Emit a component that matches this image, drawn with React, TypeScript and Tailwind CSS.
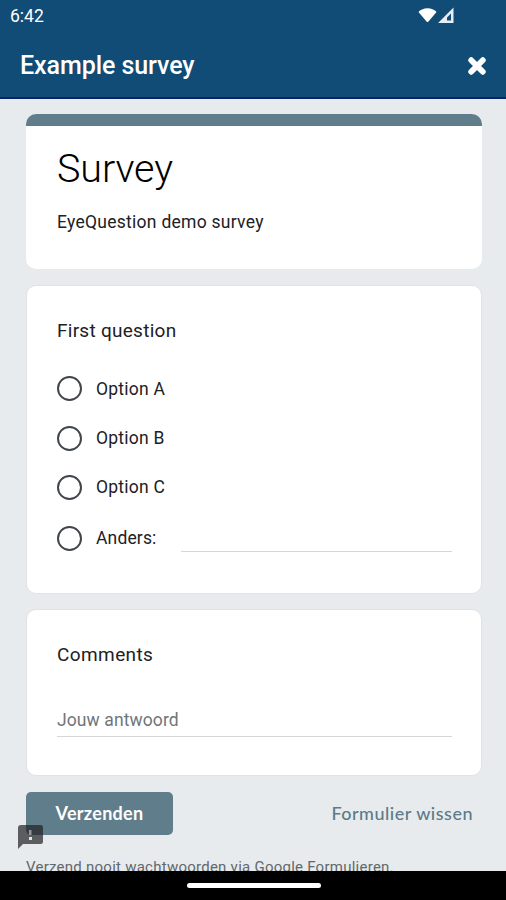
const OPTIONS = ['Option A', 'Option B', 'Option C'];

function StatusBar() {
  return (
    <div className="flex h-8 items-center justify-between pl-[10px] pr-[50px] text-white">
      <span className="text-[17.5px] leading-8">6:42</span>
      <svg width="38" height="18" viewBox="0 0 38 18">
        <path d="M0.5 5Q1 3.5 4 2.5Q9.5 0 15 2.5Q18 3.5 18.5 5L10.5 14.5Q9.5 15.5 8.5 14.5Z" fill="#fff" />
        <path fillRule="evenodd" d="M20 16L35.5 0.5V16ZM29 13.5H33V6.5L29 10.5Z" fill="#e6edf3" />
      </svg>
    </div>
  );
}

function Header() {
  return (
    <header className="h-[99px] shrink-0 border-b-2 border-[#0b2469] bg-[#104c76]">
      <StatusBar />
      <div className="flex h-[67px] items-center justify-between pl-5 pr-[19px] text-white">
        <h1 className="mt-px text-[25px] font-medium leading-8 tracking-[-0.07px]">Example survey</h1>
        <svg width="20" height="20" viewBox="0 0 20 20">
          <path d="M4.2 4.2L15.8 15.8M15.8 4.2L4.2 15.8" stroke="#fff" strokeWidth="5.8" strokeLinecap="round" />
        </svg>
      </div>
    </header>
  );
}

function Radio() {
  return <span className="size-[25px] shrink-0 rounded-full border-2 border-[#41464b]" />;
}

export default function App() {
  return (
    <div className="relative flex h-[900px] w-[506px] flex-col overflow-hidden bg-[#e7ebed] font-['Roboto',sans-serif] text-[#202124]">
      <Header />

      <main className="flex h-[772px] flex-col overflow-hidden pl-[26px] pr-6 pt-[15px]">
        {/* Title card */}
        <section className="h-[155px] shrink-0 overflow-hidden rounded-[10px] bg-white">
          <div className="h-3 bg-[#607d8b]" />
          <div className="px-[31px]">
            <h2 className="pt-[19px] text-[39.5px] font-[350] leading-[48px] tracking-[-0.1px] text-black">Survey</h2>
            <p className="mt-[17px] text-[17.5px] leading-6 tracking-[0.27px]">EyeQuestion demo survey</p>
          </div>
        </section>

        {/* Multiple choice question */}
        <section className="mt-4 h-[309px] shrink-0 rounded-[10px] border border-[#dfe3e5] bg-white pl-[30px] pr-[29px] pt-[33px]">
          <h3 className="text-[19px] font-normal leading-6 tracking-[0.27px]">First question</h3>
          <div className="mt-[21px] flex flex-col">
            {OPTIONS.map((option) => (
              <label key={option} className="flex h-[49.4px] items-center gap-[14px]">
                <Radio />
                <span className="text-[17.5px] leading-6 tracking-[0.25px]">{option}</span>
              </label>
            ))}
            <label className="flex h-[52px] items-center">
              <Radio />
              <span className="ml-[14px] w-[85px] text-[17.5px] leading-6 tracking-[0.15px]">Anders:</span>
              <span className="h-[27px] flex-1 border-b border-[#d4d6d8]" />
            </label>
          </div>
        </section>

        {/* Open question */}
        <section className="mt-[15px] h-[167px] shrink-0 rounded-[10px] border border-[#dfe3e5] bg-white pl-[30px] pr-[29px] pt-[33px]">
          <h3 className="text-[19px] font-normal leading-6 tracking-[0.4px]">Comments</h3>
          <div className="mt-[41px] h-[29px] border-b border-[#d4d6d8] text-[17.5px] leading-6 tracking-[0.1px] text-[#70757a]">
            Jouw antwoord
          </div>
        </section>

        <div className="mt-4 flex h-[43px] shrink-0 items-center justify-between font-['Lato',sans-serif]">
          <button className="h-[43px] w-[147px] rounded-[5px] bg-[#5f7d8a] text-[18px] font-bold tracking-[0.3px] text-white">
            Verzenden
          </button>
          <button className="pr-[9px] text-[18px] font-medium tracking-[0.5px] text-[#5b7b89]">Formulier wissen</button>
        </div>

        <p className="mt-[20px] shrink-0 whitespace-nowrap text-[15px] leading-6 tracking-[0.25px] text-[#63676b]">
          Verzend nooit wachtwoorden via Google Formulieren.
        </p>
      </main>

      {/* Report a problem */}
      <svg className="absolute left-[18px] top-[824px]" width="25" height="25" viewBox="0 0 25 25">
        <path d="M3 1H22.5Q25 1 25 3.5V17.5Q25 20 22.5 20H5L0 25V4Q0 1 3 1Z" fill="#202124" fillOpacity="0.7" />
        <path d="M11 6H13.5V11H11Z" fill="#8f979b" />
        <path d="M11 13H14V16H11Z" fill="#dce4e8" />
      </svg>

      {/* System navigation */}
      <footer className="flex h-[29px] shrink-0 justify-center bg-black pt-3">
        <span className="ml-px h-[5px] w-[134px] rounded-full bg-white" />
      </footer>
    </div>
  );
}
